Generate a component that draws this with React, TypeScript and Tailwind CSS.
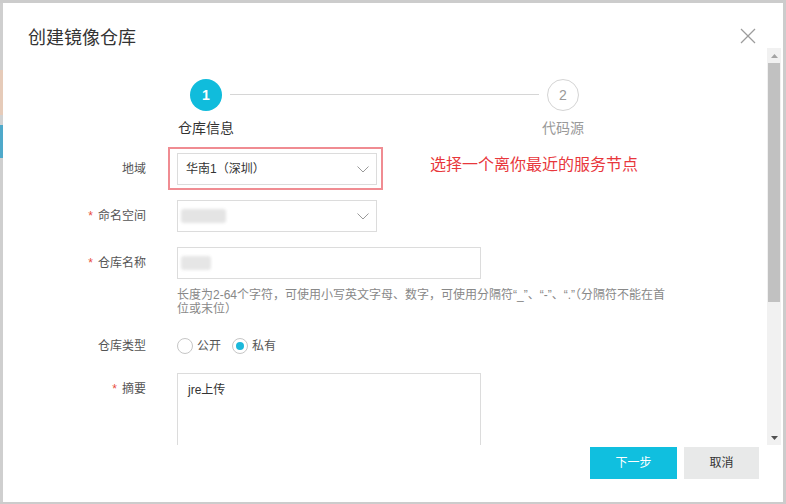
import React from "react";

function Label({ text, required }: { text: string; required?: boolean }) {
  return (
    <div className="flex h-[32px] w-[143px] shrink-0 items-center justify-end text-[12px] text-[#555]">
      {required && <span className="mr-[5px] text-[12px] text-[#e84c3d]">*</span>}
      <span>{text}</span>
    </div>
  );
}

function Chevron() {
  return (
    <svg width="12" height="7" viewBox="0 0 12 7" className="shrink-0">
      <polyline points="0.5,0.5 6,6 11.5,0.5" fill="none" stroke="#9a9a9a" strokeWidth="1" />
    </svg>
  );
}

function Radio({ checked, label }: { checked?: boolean; label: string }) {
  return (
    <div className="flex items-center">
      <span className="flex h-[16px] w-[16px] items-center justify-center rounded-full border border-[#c6c6c6] bg-white">
        {checked && <span className="h-[8px] w-[8px] rounded-full bg-[#1cb8da]" />}
      </span>
      <span className="ml-[4px] text-[12px] text-[#555]">{label}</span>
    </div>
  );
}

export default function App() {
  return (
    <div className="flex h-[504px] w-[786px] bg-[#cccccc] pb-[2px] pr-[3px] pt-[3px] font-['Liberation_Sans','Noto_Sans_CJK_SC',sans-serif]">
      {/* left edge showing page behind */}
      <div className="flex w-[3px] shrink-0 flex-col">
        <div className="h-[67px] bg-[#cfcfcf]" />
        <div className="h-[45px] bg-[#e6cbb9]" />
        <div className="h-[10px] bg-[#d2d2d2]" />
        <div className="h-[33px] bg-[#4fa9ca]" />
        <div className="flex-1 bg-[#cfcfcf]" />
      </div>

      {/* dialog panel */}
      <div className="flex w-[780px] flex-col bg-white">
        {/* header */}
        <div className="flex h-[45px] shrink-0 items-start justify-between pl-[25px] pr-[27px]">
          <div className="pt-[23px] text-[18px] leading-[24px] text-[#333]">创建镜像仓库</div>
          <svg width="16" height="16" viewBox="0 0 16 16" className="mt-[25px]">
            <line x1="1" y1="1" x2="15" y2="15" stroke="#9c9c9c" strokeWidth="1.3" />
            <line x1="15" y1="1" x2="1" y2="15" stroke="#9c9c9c" strokeWidth="1.3" />
          </svg>
        </div>

        {/* scroll region */}
        <div className="flex h-[397px] shrink-0 pr-[2px]">
          <div className="w-[764px] overflow-hidden">
            {/* steps */}
            <div className="ml-[179px] flex w-[405px] items-start pt-[31px]">
              <div className="flex w-[48px] flex-col items-center">
                <div className="flex h-[32px] w-[32px] items-center justify-center rounded-full bg-[#10bcdc] text-[14px] font-bold text-white">
                  1
                </div>
                <div className="mt-[7px] whitespace-nowrap text-[14px] leading-[20px] text-[#333]">仓库信息</div>
              </div>
              <div className="mt-[15px] h-px flex-1 bg-[#d6d6d6]" />
              <div className="flex w-[48px] flex-col items-center">
                <div className="flex h-[32px] w-[32px] items-center justify-center rounded-full border border-[#d4d4d4] bg-white text-[14px] text-[#999]">
                  2
                </div>
                <div className="mt-[7px] whitespace-nowrap text-[14px] leading-[20px] text-[#999]">代码源</div>
              </div>
            </div>

            {/* row 1: 地域 */}
            <div className="mt-[15px] flex items-start">
              <Label text="地域" />
              <div className="relative ml-[31px] flex h-[32px] w-[200px] items-center justify-between border border-[#dcdcdc] pl-[8px] pr-[7px] text-[12px] text-[#333]">
                <span>华南1（深圳）</span>
                <Chevron />
                <div className="pointer-events-none absolute -left-[10px] -top-[7px] h-[43px] w-[215px] border-2 border-[#f08c92]" />
              </div>
              <div className="ml-[53px] mt-[1px] whitespace-nowrap text-[16px] leading-[22px] text-[#e8373c]">
                选择一个离你最近的服务节点
              </div>
            </div>

            {/* row 2: 命名空间 */}
            <div className="mt-[15px] flex items-start">
              <Label text="命名空间" required />
              <div className="ml-[31px] flex h-[32px] w-[200px] items-center justify-between border border-[#dcdcdc] pl-[3px] pr-[7px]">
                <div className="flex h-[15px] w-[45px] items-center">
                  <div className="h-[14px] w-[45px] rounded-[3px] bg-[#e4e4e4] blur-[1.5px]" />
                </div>
                <Chevron />
              </div>
            </div>

            {/* row 3: 仓库名称 */}
            <div className="mt-[15px] flex items-start">
              <Label text="仓库名称" required />
              <div className="ml-[31px] flex h-[32px] w-[304px] items-center border border-[#dcdcdc] pl-[3px]">
                <div className="h-[14px] w-[30px] rounded-[3px] bg-[#e6e6e6] blur-[1.5px]" />
              </div>
            </div>
            <div className="ml-[174px] mt-[9px] text-[12px] leading-[14px] text-[#888]">
              长度为2-64个字符，可使用小写英文字母、数字，可使用分隔符“_”、“-”、“.”（分隔符不能在首
              <br />
              位或末位）
            </div>

            {/* row 4: 仓库类型 */}
            <div className="mt-[14px] flex items-center">
              <Label text="仓库类型" />
              <div className="ml-[31px] flex h-[32px] items-center gap-[11px]">
                <Radio label="公开" />
                <Radio label="私有" checked />
              </div>
            </div>

            {/* row 5: 摘要 */}
            <div className="mt-[11px] flex items-start">
              <Label text="摘要" required />
              <div className="ml-[31px] h-[110px] w-[304px] border border-[#dcdcdc] pl-[10px] pt-[8px] text-[12px] leading-[16px] text-[#333]">
                jre上传
              </div>
            </div>
          </div>

          {/* scrollbar */}
          <div className="flex w-[14px] shrink-0 flex-col bg-[#f1f1f1]">
            <div className="flex h-[15px] items-center justify-center">
              <svg width="7" height="4" viewBox="0 0 7 4">
                <polygon points="0,4 3.5,0 7,4" fill="#a3a3a3" />
              </svg>
            </div>
            <div className="mx-px h-[239px] bg-[#c1c1c1]" />
            <div className="flex-1" />
            <div className="flex h-[15px] items-center justify-center">
              <svg width="7" height="4" viewBox="0 0 7 4">
                <polygon points="0,0 7,0 3.5,4" fill="#505050" />
              </svg>
            </div>
          </div>
        </div>

        {/* footer */}
        <div className="flex flex-1 items-start justify-end gap-[7px] pr-[24px] pt-[2px]">
          <button className="flex h-[32px] w-[87px] items-center justify-center bg-[#10bfdf] text-[12px] text-white">
            下一步
          </button>
          <button className="flex h-[32px] w-[75px] items-center justify-center bg-[#e8e9e9] text-[12px] text-[#333]">
            取消
          </button>
        </div>
      </div>
    </div>
  );
}
